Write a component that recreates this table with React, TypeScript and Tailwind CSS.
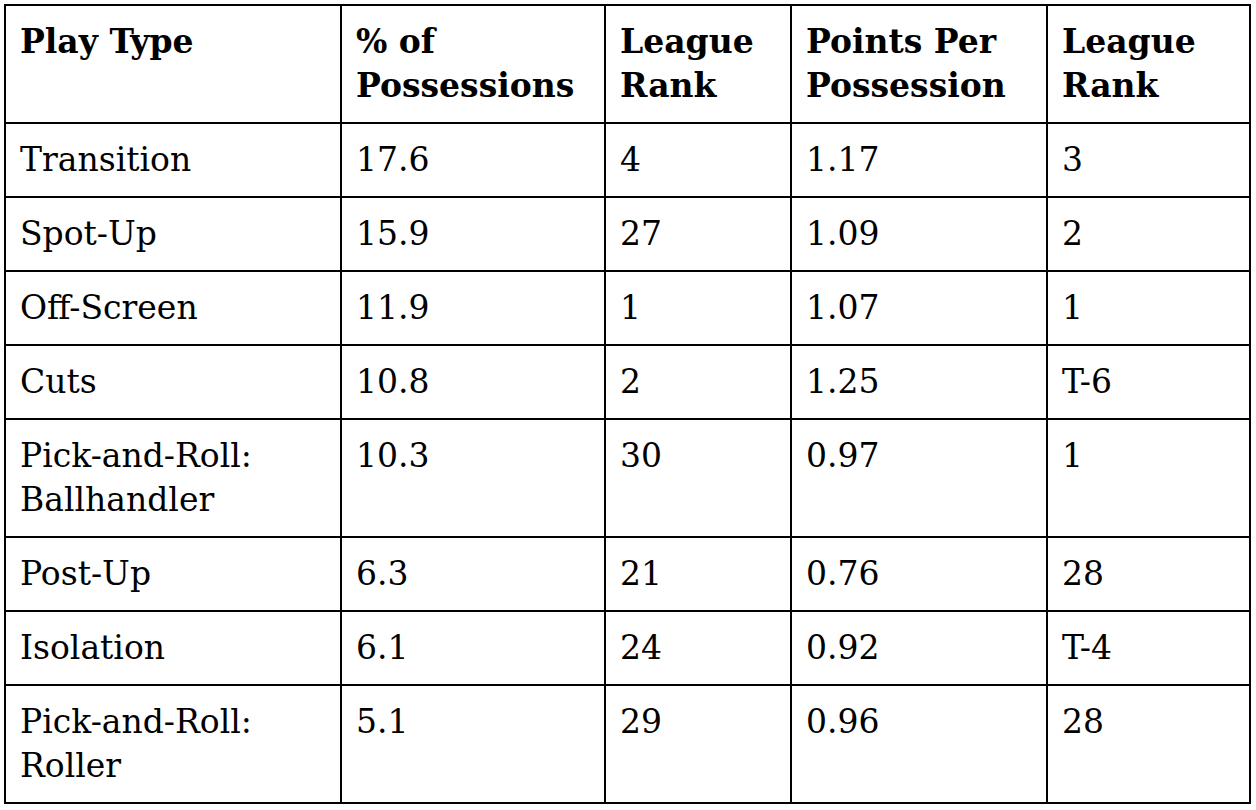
const HEADERS = [
  ["Play Type"],
  ["% of", "Possessions"],
  ["League", "Rank"],
  ["Points Per", "Possession"],
  ["League", "Rank"],
];

const ROWS = [
  [["Transition"], "17.6", "4", "1.17", "3"],
  [["Spot-Up"], "15.9", "27", "1.09", "2"],
  [["Off-Screen"], "11.9", "1", "1.07", "1"],
  [["Cuts"], "10.8", "2", "1.25", "T-6"],
  [["Pick-and-Roll:", "Ballhandler"], "10.3", "30", "0.97", "1"],
  [["Post-Up"], "6.3", "21", "0.76", "28"],
  [["Isolation"], "6.1", "24", "0.92", "T-4"],
  [["Pick-and-Roll:", "Roller"], "5.1", "29", "0.96", "28"],
] as const;

function Lines({ lines }: { lines: readonly string[] }) {
  return (
    <>
      {lines.map((line, i) => (
        <div key={i} className="whitespace-nowrap">
          {line}
        </div>
      ))}
    </>
  );
}

export default function App() {
  const cell = "border-r-2 border-b-2 border-black pl-[14px] pr-2 pt-[14px] pb-[14px]";

  return (
    <div className="min-h-screen bg-white p-[4px] font-['DejaVu_Serif',serif] text-[33px] leading-[44px] text-black">
      <div className="grid w-fit grid-cols-[336px_264px_186px_256px_203px] border-t-2 border-l-2 border-black">
        {HEADERS.map((h, i) => (
          <div key={i} className={`${cell} font-bold`}>
            <Lines lines={h} />
          </div>
        ))}

        {ROWS.map((row, r) => (
          <div key={r} className="contents">
            <div className={cell}>
              <Lines lines={row[0]} />
            </div>
            {row.slice(1).map((v, c) => (
              <div key={c} className={cell}>
                {v as string}
              </div>
            ))}
          </div>
        ))}
      </div>
    </div>
  );
}
